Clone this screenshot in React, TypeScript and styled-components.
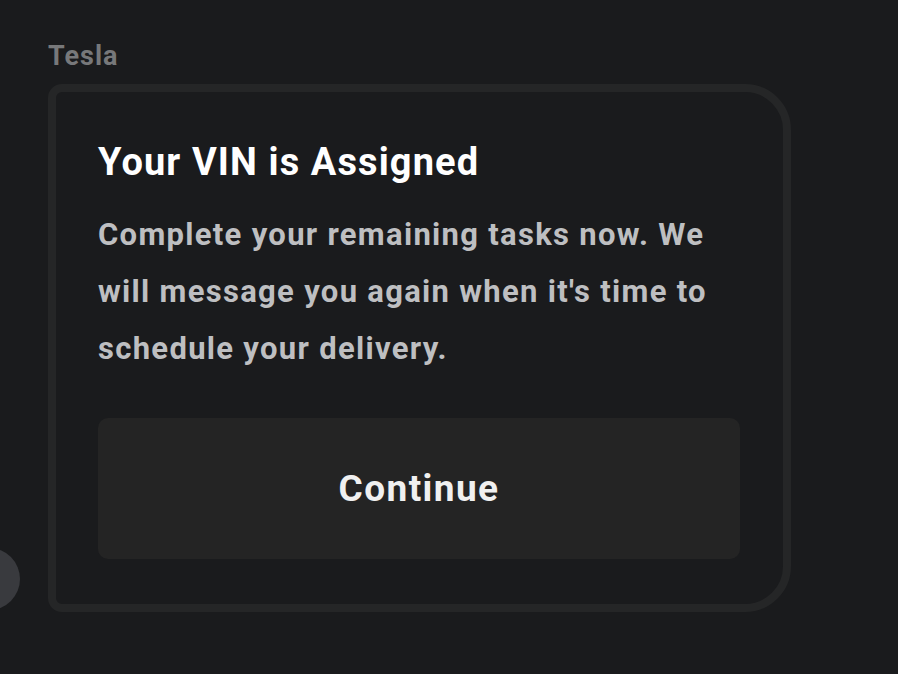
import React from "react";
import styled, { createGlobalStyle } from "styled-components";

const GlobalStyle = createGlobalStyle`
	html,
	body {
		margin: 0;
		background: #1a1b1d;
		font-family: Roboto, "Liberation Sans", sans-serif;
	}
`;

const Page = styled.div`
	position: relative;
	min-height: 674px;
	padding: 40px 0 0 48px;
	box-sizing: border-box;
	overflow: hidden;
`;

const Sender = styled.div`
	font-size: 27px;
	line-height: 32px;
	font-weight: 700;
	letter-spacing: 1px;
	color: #77787a;
`;

const Bubble = styled.div`
	width: 743px;
	margin-top: 12px;
	box-sizing: border-box;
	border: 8px solid #252627;
	border-radius: 14px 46px 46px 14px;
	background: #1a1b1d;
	padding: 48px 43px 45px 42px;
`;

const Title = styled.h2`
	margin: 0;
	font-size: 38px;
	line-height: 1.2;
	font-weight: 700;
	letter-spacing: 1.1px;
	color: #ffffff;
`;

const Message = styled.p`
	margin: 20px 0 0;
	font-size: 31px;
	line-height: 57px;
	font-weight: 700;
	letter-spacing: 1.3px;
	color: #bebfc1;
`;

const ActionButton = styled.button`
	display: block;
	width: 100%;
	height: 141px;
	margin-top: 41px;
	border: none;
	border-radius: 10px;
	background: #242424;
	color: #f0f0f0;
	font-family: inherit;
	font-size: 37px;
	font-weight: 700;
	letter-spacing: 1.4px;
	cursor: pointer;
`;

// avatar of the next message, mostly scrolled off the left edge
const Avatar = styled.div`
	position: absolute;
	left: -42px;
	top: 548px;
	width: 62px;
	height: 62px;
	border-radius: 50%;
	background: #393a3e;
`;

export default function App() {
	return (
		<>
			<GlobalStyle />
			<Page>
				<Sender>Tesla</Sender>
				<Bubble>
					<Title>Your VIN is Assigned</Title>
					<Message>
						Complete your remaining tasks now. We will message you again when it's time to
						schedule your delivery.
					</Message>
					<ActionButton>Continue</ActionButton>
				</Bubble>
				<Avatar />
			</Page>
		</>
	);
}
